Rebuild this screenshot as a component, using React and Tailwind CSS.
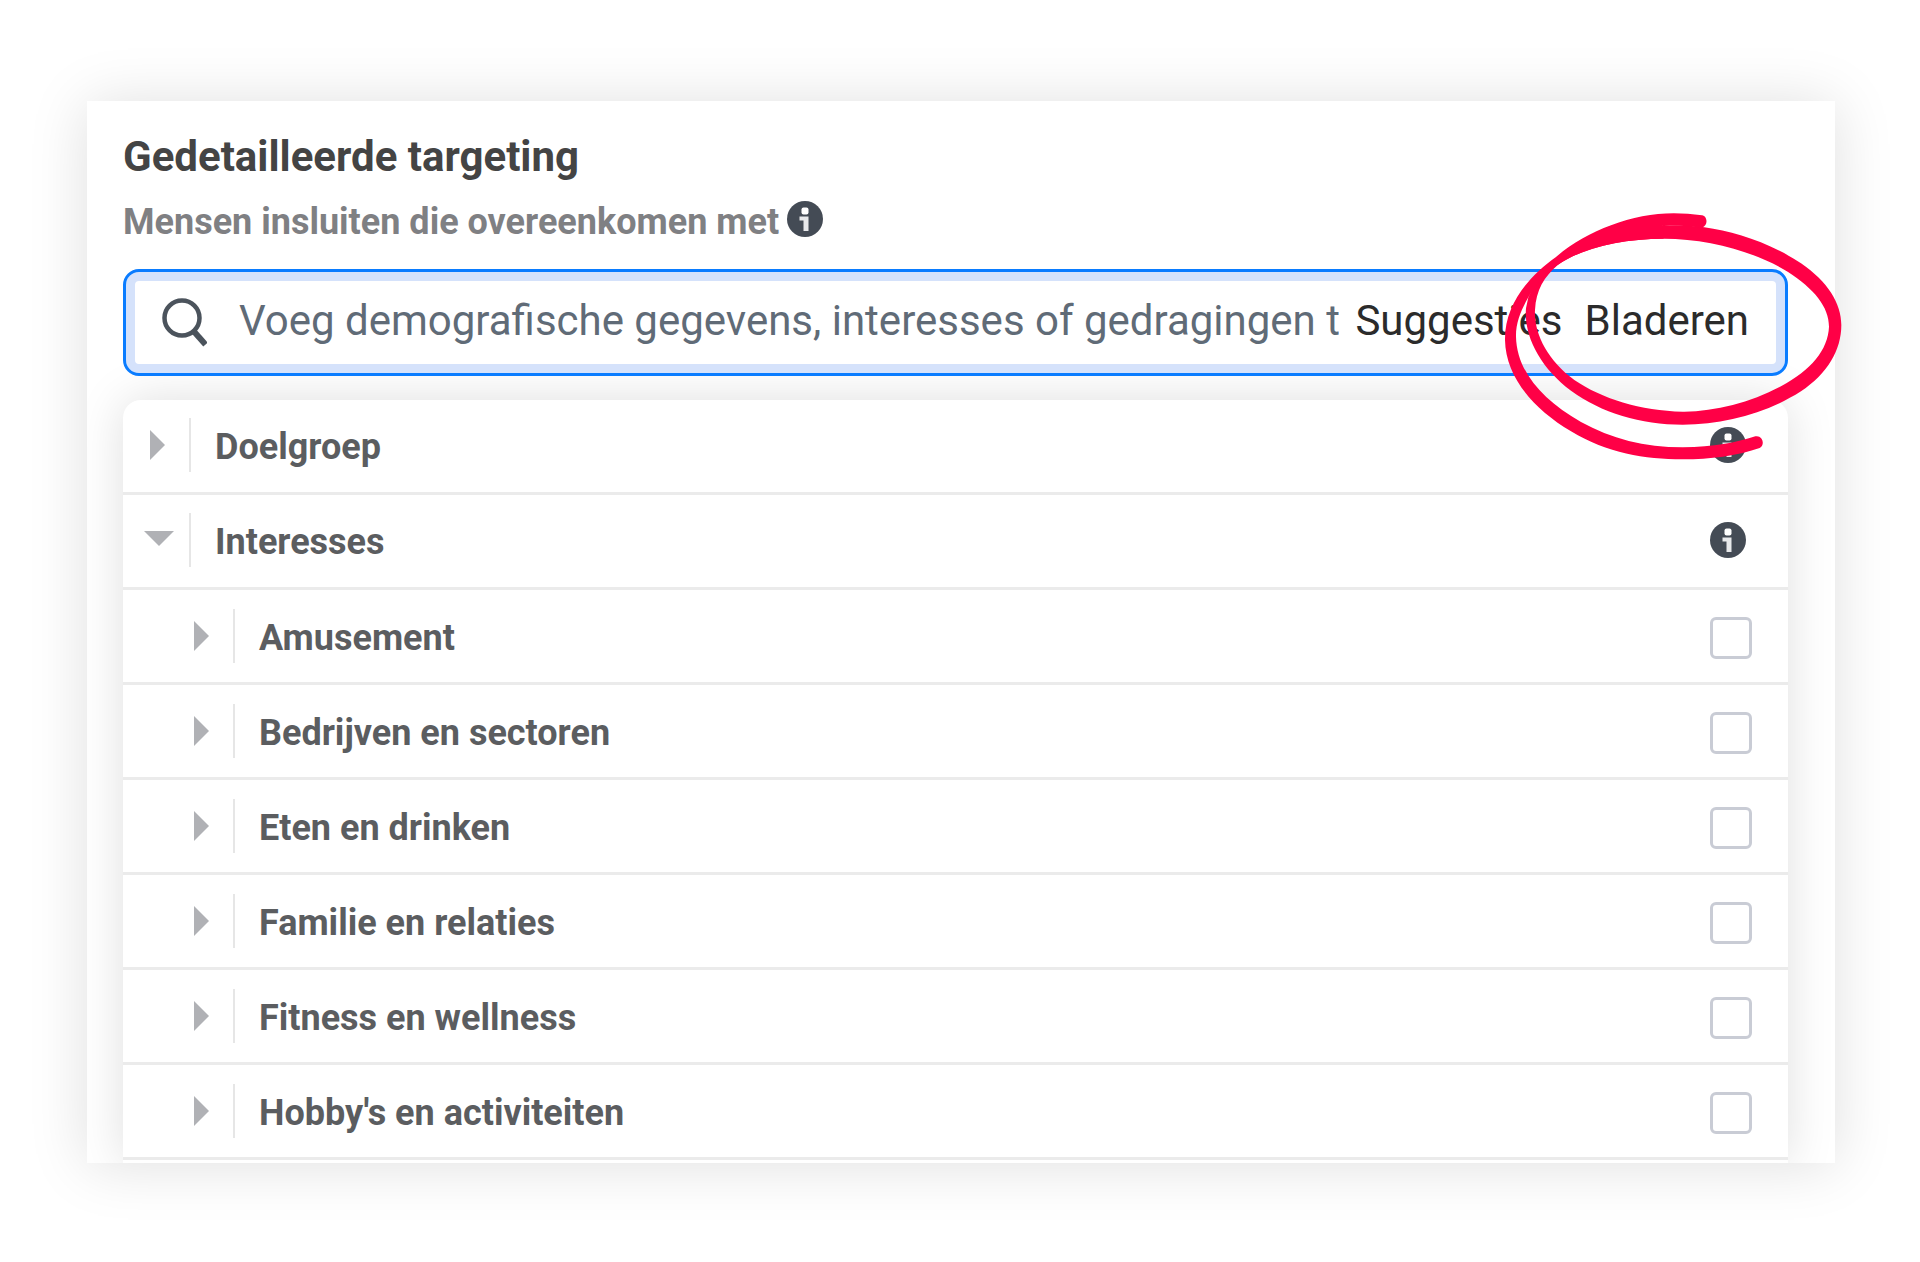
import { useState } from 'react';

const GROUPS = [
  { id: 'doelgroep', label: 'Doelgroep', children: [] },
  {
    id: 'interesses',
    label: 'Interesses',
    children: [
      { id: 'amusement', label: 'Amusement' },
      { id: 'bedrijven', label: 'Bedrijven en sectoren' },
      { id: 'eten', label: 'Eten en drinken' },
      { id: 'familie', label: 'Familie en relaties' },
      { id: 'fitness', label: 'Fitness en wellness' },
      { id: 'hobbys', label: "Hobby's en activiteiten" },
    ],
  },
];

function InfoIcon() {
  return (
    <svg viewBox="0 0 36 36" className="size-9 shrink-0" aria-hidden="true">
      <circle cx="18" cy="18" r="18" fill="#444b55" />
      <rect x="14.5" y="6.5" width="7" height="7" rx="2" fill="#fff" />
      <path d="M12.5 15.5h9V30h-5V19.5h-4z" fill="#e8e9eb" />
    </svg>
  );
}

function SearchIcon() {
  return (
    <svg viewBox="0 0 45 49" className="h-[49px] w-[45px] shrink-0" fill="none" stroke="#4b535c" aria-hidden="true">
      <circle cx="20" cy="20" r="17.5" strokeWidth="4.5" />
      <path d="M31.5 33L43.5 46.5" strokeWidth="6" />
    </svg>
  );
}

function Arrow({ open }) {
  return (
    <svg viewBox="0 0 30 30" className="size-[30px] shrink-0" fill="#b0b1b5" aria-hidden="true">
      {open ? <path d="M0 6h30L15 21z" /> : <path d="M6 0v30l15-15z" />}
    </svg>
  );
}

// Hand-drawn marker loop around the browse button
function MarkerLoop() {
  return (
    <svg
      viewBox="180 60 1044 762"
      className="pointer-events-none absolute -top-[62px] -right-16 z-10 h-[254px] w-[348px]"
      fill="#ff0046"
      aria-hidden="true"
    >
      <path
        fillRule="evenodd"
        d="M668 105C720 106 760 108 790 112C880 124 990 160 1080 220C1160 275 1201 340 1201 405C1201 480 1160 550 1080 604C980 668 850 704 725 704C600 704 480 668 390 602C300 535 248 440 255 355L262 322L300 240L480 130Z
           M668 146C800 146 940 184 1040 245C1120 297 1164 350 1164 410C1161 480 1110 540 1020 589C930 637 820 666 725 665C600 663 480 625 400 570C320 512 278 430 282 360C285 300 310 260 350 225C420 175 540 146 668 146Z"
      />
      <path d="M783 76C800 78 802 108 783 113C740 108 700 105 665 106L668 146C540 146 420 175 350 225C310 250 280 290 262 322C240 360 224 400 225 440C227 540 300 628 420 696C510 746 610 772 725 772C820 771 885 758 943 739C964 734 974 764 956 774C885 798 810 808 725 808C610 808 500 790 390 724C275 655 194 560 192 450C191 345 260 262 345 201C390 162 450 128 510 106C600 70 690 62 783 76Z" />
    </svg>
  );
}

export default function App() {
  const [query, setQuery] = useState('');
  const [open, setOpen] = useState({ interesses: true });
  const [checked, setChecked] = useState({});

  const toggle = (id) => setOpen((prev) => ({ ...prev, [id]: !prev[id] }));

  return (
    <div className="min-h-screen bg-white pt-[101px] pr-[85px] pb-[99px] pl-[87px] font-['Roboto',sans-serif]">
      <main className="bg-white pt-8 shadow-[0_2px_56px_rgba(0,0,0,0.13)]">
        <div className="pr-[47px] pl-9">
          <h1 className="text-[42px] leading-[48px] font-bold text-[#444444]">Gedetailleerde targeting</h1>
          <div className="mt-5 flex items-start gap-2">
            <label htmlFor="targeting" className="text-[36px] leading-[42px] font-bold text-[#7f8083]">
              Mensen insluiten die overeenkomen met
            </label>
            <InfoIcon />
          </div>

          {/* Search bar */}
          <div className="relative mt-[26px] flex h-[107px] items-center rounded-[16px] border-[3px] border-[#0a7cff] bg-white pr-9 pl-9 shadow-[inset_0_0_0_9px_#d5e2fb]">
            <SearchIcon />
            <input
              id="targeting"
              type="text"
              value={query}
              onChange={(e) => setQuery(e.target.value)}
              placeholder="Voeg demografische gegevens, interesses of gedragingen toe"
              className="ml-8 min-w-0 flex-1 bg-transparent pb-1 text-[42px] leading-[56px] text-[#606b77] outline-none placeholder:text-[#606b77]"
            />
            <div className="ml-4 flex gap-[22px] pb-1 text-[42px] leading-[56px] text-[#2b2b2b]">
              <button type="button">Suggesties</button>
              <button type="button">Bladeren</button>
            </div>
            <MarkerLoop />
          </div>
        </div>

        {/* Browse list */}
        <div className="-mt-6 overflow-hidden pt-12 pr-[47px] pl-9">
          <ul className="rounded-t-[18px] bg-white pb-[3px] text-[36px] leading-[44px] font-bold text-[#5b5d60] shadow-[0_0_48px_rgba(0,0,0,0.13)]">
            {GROUPS.map((group) => (
              <li key={group.id}>
                <div className="flex h-[95px] items-center border-b-[3px] border-[#ebebeb] pr-[42px] pb-[2px] pl-[21px]">
                  <button
                    type="button"
                    aria-expanded={!!open[group.id]}
                    onClick={() => toggle(group.id)}
                    className="flex flex-1 items-center text-left"
                  >
                    <Arrow open={open[group.id]} />
                    <span className="ml-[15px] h-[54px] w-[2px] bg-[#e6e6e6]" />
                    <span className="ml-6 pt-1">{group.label}</span>
                  </button>
                  <InfoIcon />
                </div>
                {open[group.id] && (
                  <ul>
                    {group.children.map((item) => (
                      <li key={item.id} className="flex h-[95px] items-center border-b-[3px] border-[#ebebeb] pr-9 pl-[65px]">
                        <button type="button" aria-label={item.label}>
                          <Arrow />
                        </button>
                        <span className="ml-[15px] h-[54px] w-[2px] bg-[#e6e6e6]" />
                        <label htmlFor={item.id} className="ml-6 flex-1 pt-1">{item.label}</label>
                        <input
                          id={item.id}
                          type="checkbox"
                          checked={!!checked[item.id]}
                          onChange={(e) => setChecked((prev) => ({ ...prev, [item.id]: e.target.checked }))}
                          className="mt-1 size-[42px] appearance-none rounded-[6px] border-[3px] border-[#c9ccd5] bg-white checked:bg-[#0a7cff]"
                        />
                      </li>
                    ))}
                  </ul>
                )}
              </li>
            ))}
          </ul>
        </div>
      </main>
    </div>
  );
}
